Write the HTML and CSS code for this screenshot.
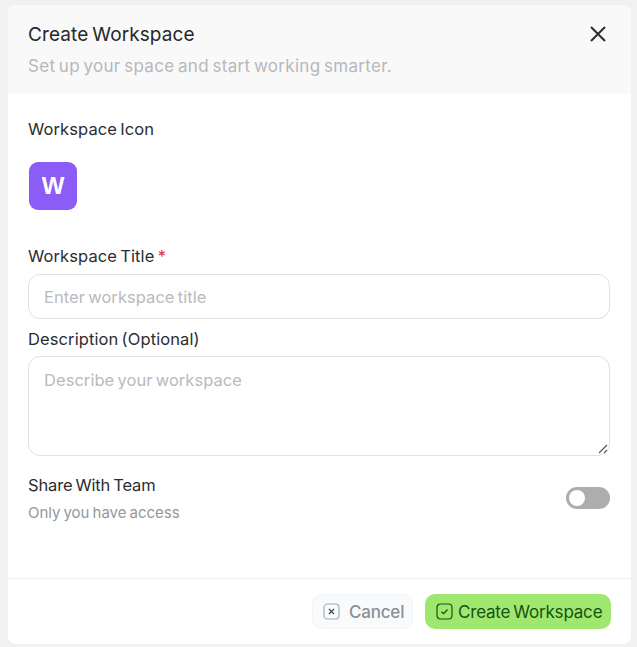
FILE: index.html
```html
<!DOCTYPE html>
<html lang="en">
<head>
<meta charset="utf-8">
<title>Create Workspace</title>
<link rel="stylesheet" href="styles.css">
</head>
<body>
<div class="modal">
  <header class="head">
    <div>
      <h1 class="title">Create Workspace</h1>
      <p class="subtitle">Set up your space and start working smarter.</p>
    </div>
    <svg class="close" width="18" height="18" viewBox="0 0 18 18" fill="none" stroke="#2a2c30" stroke-width="2"><path d="M2 2 16 16M16 2 2 16"/></svg>
  </header>
  <main class="body">
    <div class="label icon-label">Workspace Icon</div>
    <div class="avatar">W</div>
    <label class="label title-label">Workspace Title <span class="req">*</span></label>
    <div class="input">Enter workspace title</div>
    <label class="label desc-label">Description (Optional)</label>
    <div class="textarea">Describe your workspace
      <svg class="grip" width="10" height="10" viewBox="0 0 10 10" fill="none" stroke="#555" stroke-width="1.1"><path d="M1 9 9 1M6 9 9 6"/></svg>
    </div>
    <div class="share">
      <div>
        <div class="label share-label">Share With Team</div>
        <div class="hint">Only you have access</div>
      </div>
      <div class="toggle"><span class="knob"></span></div>
    </div>
  </main>
  <footer class="foot">
    <button class="btn cancel" type="button">
      <svg width="17" height="17" viewBox="0 0 17 17" fill="none" stroke="#a3a7ad" stroke-width="1.1"><rect x="1" y="1" width="15" height="15" rx="3.5"/><path d="M6 6 11 11M11 6 6 11" stroke="#44474c" stroke-width="1.2"/></svg>
      Cancel
    </button>
    <button class="btn create" type="button">
      <svg width="17" height="17" viewBox="0 0 17 17" fill="none" stroke="#14530f" stroke-width="1.2"><rect x="1" y="1" width="15" height="15" rx="3.5"/><path d="M5.5 8.7 7.6 10.7 11.5 6.5" stroke-width="1.3"/></svg>
      Create Workspace
    </button>
  </footer>
</div>
</body>
</html>
```
FILE: styles.css
```css
* { box-sizing: border-box; }
html, body { height: 100%; }
body {
  margin: 0;
  padding: 5px 6px 3px 8px;
  background: #f1f1f1;
  font-family: "Inter", "Liberation Sans", sans-serif;
  overflow: hidden;
}
.modal {
  height: 639px;
  background: #fff;
  border-radius: 8px;
  display: flex;
  flex-direction: column;
  overflow: hidden;
}
.head {
  height: 89px;
  flex: none;
  background: #f9f9fa;
  padding: 18px 24px 0 20px;
  display: flex;
  justify-content: space-between;
  align-items: flex-start;
}
.title {
  margin: 0;
  font-size: 19px;
  line-height: 24px;
  font-weight: 400;
  color: #26282c;
  letter-spacing: 0.1px;
  word-spacing: -1.5px;
}
.subtitle {
  margin: 9px 0 0;
  font-size: 17px;
  line-height: 20px;
  color: #b6b8bb;
  letter-spacing: 0.3px;
  word-spacing: -1.5px;
}
.close { margin-top: 2px; }
.body {
  flex: 1;
  padding: 0 21px 0 20px;
}
.label {
  font-size: 16.5px;
  line-height: 20px;
  color: #2b2d31;
  letter-spacing: 0.1px;
  word-spacing: -1.5px;
  display: block;
}
.share-label { letter-spacing: -0.15px; }
.icon-label { margin-top: 25px; }
.avatar {
  width: 48px;
  height: 48px;
  margin: 23px 0 0 1px;
  background: #8b5cf6;
  border-radius: 9px;
  color: #fff;
  font-family: "Liberation Sans", sans-serif;
  font-weight: 700;
  font-size: 24px;
  display: flex;
  align-items: center;
  justify-content: center;
}
.title-label { margin-top: 36px; }
.req { color: #e0383e; }
.input, .textarea {
  border: 1px solid #dedfe1;
  border-radius: 12px;
  font-size: 16.5px;
  color: #b9babd;
  letter-spacing: 0.05px;
  word-spacing: -1.5px;
  padding-left: 15px;
}
.input {
  height: 45px;
  margin-top: 8px;
  line-height: 45px;
}
.desc-label { margin-top: 10px; }
.textarea {
  position: relative;
  height: 100px;
  margin-top: 7px;
  padding-top: 13px;
  line-height: 20px;
}
.grip { position: absolute; right: 1px; bottom: 1px; }
.share {
  display: flex;
  justify-content: space-between;
  align-items: center;
  margin-top: 19px;
}
.hint {
  margin-top: 8px;
  font-size: 15px;
  line-height: 20px;
  color: #94979c;
  word-spacing: -1.2px;
}
.toggle {
  width: 44px;
  height: 22px;
  margin-bottom: 2px;
  border-radius: 11px;
  background: #adadad;
  padding: 3px;
}
.knob {
  display: block;
  width: 16px;
  height: 16px;
  border-radius: 50%;
  background: #fff;
}
.foot {
  height: 66px;
  flex: none;
  border-top: 1px solid #f0f0f2;
  padding: 15px 20px 0 0;
  display: flex;
  justify-content: flex-end;
  align-items: flex-start;
  gap: 12px;
}
.btn {
  height: 35px;
  border-radius: 10px;
  font-family: inherit;
  font-size: 17px;
  letter-spacing: -0.2px;
  word-spacing: -1.5px;
  display: flex;
  align-items: center;
  gap: 7px;
}
.cancel {
  width: 101px;
  padding: 0 0 0 10px;
  background: #f9fafb;
  border: 1px solid #f2f3f5;
  color: #8b9098;
  font-weight: 500;
  gap: 9px;
}
.create {
  width: 186px;
  padding: 0 0 0 11px;
  background: #a0e76f;
  border: 0;
  color: #14530f;
  gap: 5px;
}
```
